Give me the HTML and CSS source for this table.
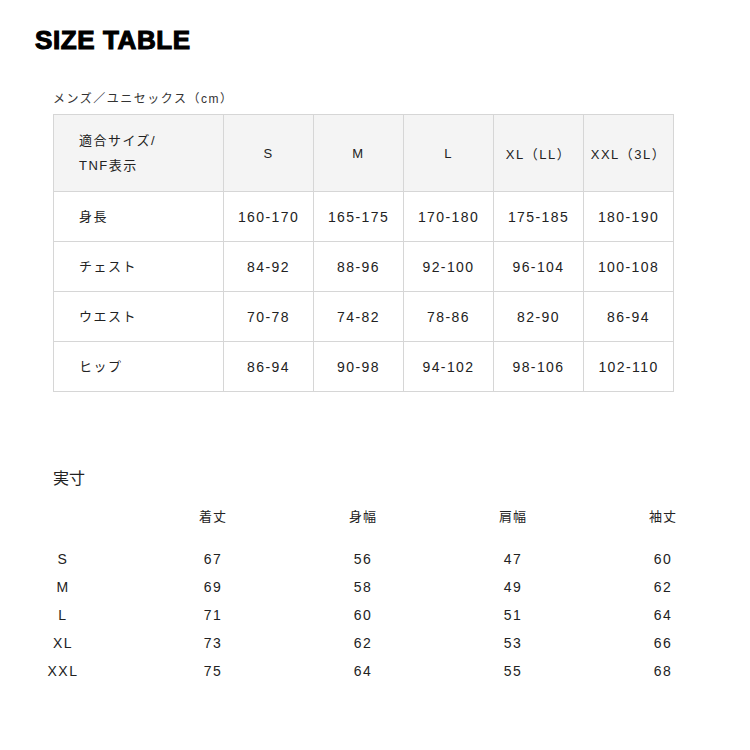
FILE: index.html
```html
<!DOCTYPE html>
<html lang="ja">
<head>
<meta charset="utf-8">
<link rel="stylesheet" href="styles.css">
</head>
<body>
<h1 class="title">SIZE TABLE</h1>
<p class="subtitle">メンズ／ユニセックス（cm）</p>
<table class="size-table">
  <colgroup>
    <col class="c-label"><col class="c-val"><col class="c-val"><col class="c-val"><col class="c-val"><col class="c-val">
  </colgroup>
  <tr class="head">
    <th class="label">適合サイズ/<br>TNF表示</th>
    <th>S</th><th>M</th><th>L</th><th>XL（LL）</th><th>XXL（3L）</th>
  </tr>
  <tr><td class="label">身長</td><td>160-170</td><td>165-175</td><td>170-180</td><td>175-185</td><td>180-190</td></tr>
  <tr><td class="label">チェスト</td><td>84-92</td><td>88-96</td><td>92-100</td><td>96-104</td><td>100-108</td></tr>
  <tr><td class="label">ウエスト</td><td>70-78</td><td>74-82</td><td>78-86</td><td>82-90</td><td>86-94</td></tr>
  <tr><td class="label">ヒップ</td><td>86-94</td><td>90-98</td><td>94-102</td><td>98-106</td><td>102-110</td></tr>
</table>

<h2 class="section">実寸</h2>
<div class="actual">
  <div class="arow ahead"><span></span><span>着丈</span><span>身幅</span><span>肩幅</span><span>袖丈</span></div>
  <div class="arow"><span>S</span><span>67</span><span>56</span><span>47</span><span>60</span></div>
  <div class="arow"><span>M</span><span>69</span><span>58</span><span>49</span><span>62</span></div>
  <div class="arow"><span>L</span><span>71</span><span>60</span><span>51</span><span>64</span></div>
  <div class="arow"><span>XL</span><span>73</span><span>62</span><span>53</span><span>66</span></div>
  <div class="arow"><span>XXL</span><span>75</span><span>64</span><span>55</span><span>68</span></div>
</div>
</body>
</html>
```
FILE: styles.css
```css
html, body {
  margin: 0;
  padding: 0;
  background: #fff;
}
body {
  font-family: "Liberation Sans", "Noto Sans CJK JP", sans-serif;
  color: #333;
}
.title {
  margin: 27px 0 0 35px;
  font-size: 26px;
  line-height: 26px;
  font-weight: 700;
  color: #000;
  -webkit-text-stroke: 1.1px #000;
  letter-spacing: 0.6px;
}
.subtitle {
  margin: 38px 0 0 53px;
  font-size: 12px;
  line-height: 16px;
  letter-spacing: 1.5px;
  color: #333;
}
.size-table {
  margin: 7px 0 0 53px;
  border-collapse: collapse;
  table-layout: fixed;
  width: 620px;
  font-size: 14px;
  color: #222;
}
.c-label { width: 170px; }
.c-val { width: 90px; }
.size-table th,
.size-table td {
  border: 1px solid #d6d6d6;
  text-align: center;
  vertical-align: middle;
  font-weight: 400;
  letter-spacing: 1.4px;
  padding: 0;
  height: 49px;
}
.size-table .head th {
  background: #f4f4f4;
  height: 76px;
  font-size: 13px;
  letter-spacing: 1.5px;
}
.size-table .label {
  text-align: left;
  padding-left: 25px;
  line-height: 25px;
  font-size: 13px;
  letter-spacing: 1.5px;
}
.section {
  margin: 77px 0 0 53px;
  font-size: 16px;
  line-height: 20px;
  font-weight: 400;
  color: #222;
}
.actual {
  margin: 18px 0 0 0;
  width: 738px;
  font-size: 14px;
  color: #222;
}
.arow {
  display: grid;
  grid-template-columns: 138px repeat(4, 150px);
  height: 28px;
  line-height: 28px;
  letter-spacing: 1.5px;
}
.arow span {
  text-align: center;
}
.arow span:first-child {
  padding-right: 12px;
  letter-spacing: 1.5px;
}
.ahead {
  height: 20px;
  line-height: 20px;
  margin-bottom: 18px;
  font-size: 13px;
  letter-spacing: 1px;
}
```
